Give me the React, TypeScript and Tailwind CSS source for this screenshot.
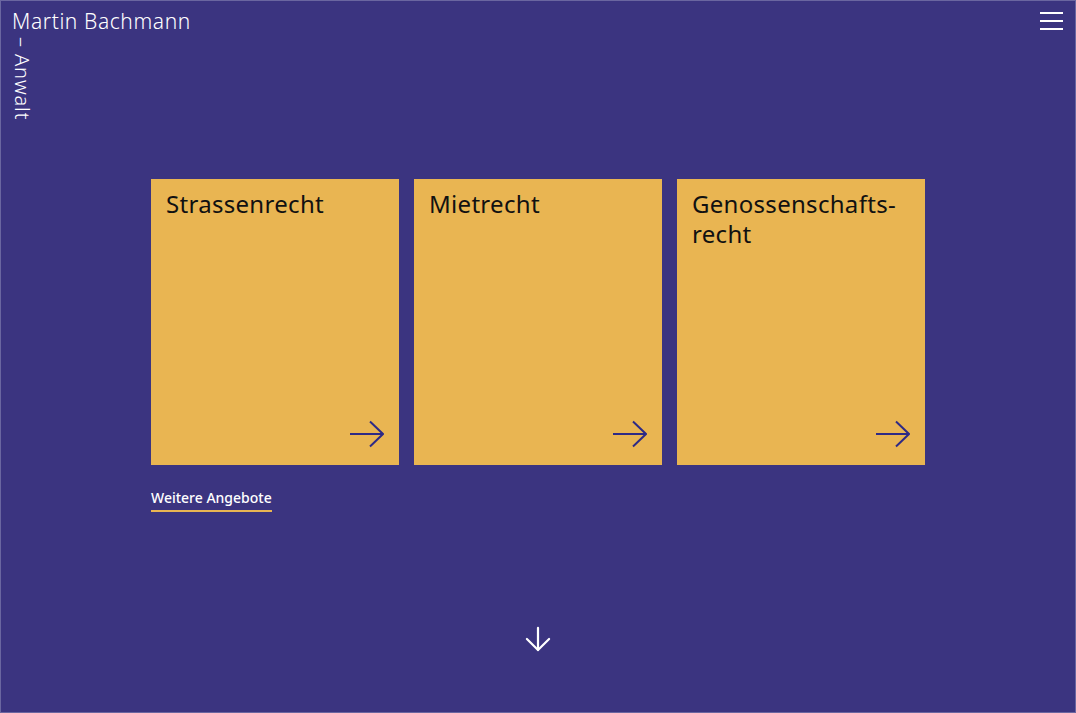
import { ArrowDown } from 'lucide-react'

const AREAS = [
  { id: 'strasse', title: 'Strassenrecht' },
  { id: 'miete', title: 'Mietrecht' },
  { id: 'genossen', title: 'Genossenschafts-\nrecht' },
]

function ArrowRight() {
  return (
    <svg width="36" height="28" viewBox="0 0 36 28" fill="none" stroke="#2e2a86" strokeWidth="2" strokeLinecap="butt">
      <line x1="2" y1="14" x2="35" y2="14" />
      <polyline points="22,1.5 35,14 22,26.5" strokeLinejoin="miter" />
    </svg>
  )
}

export default function App() {
  return (
    <div
      className="relative h-[713px] w-full overflow-hidden border border-[#6a66a0] bg-[#3b3480] text-white"
      style={{ fontFamily: '"Noto Sans", Inter, sans-serif' }}
    >
      {/* brand */}
      <header className="flex items-start justify-between px-[11px] pt-[6px]">
        <div>
          <div className="text-[21px] font-light leading-[28px] tracking-[0.6px]">Martin Bachmann</div>
          <div className="mt-[2px] h-[74px] w-[20px]">
            <div className="origin-top-left translate-x-[20px] rotate-90 whitespace-nowrap text-[20px] font-light leading-[20px] tracking-[0.9px]">
              – Anwalt
            </div>
          </div>
        </div>
        <button className="mr-[1px] mt-[5px] flex w-[23px] flex-col gap-[6px]" aria-label="Menü">
          <span className="block h-[2px] w-full bg-white" />
          <span className="block h-[2px] w-full bg-white" />
          <span className="block h-[2px] w-full bg-white" />
        </button>
      </header>

      {/* practice areas */}
      <main className="mx-auto mt-[68px] w-[774px]">
        <div className="grid grid-cols-3 gap-[15px]">
          {AREAS.map((a) => (
            <a
              key={a.id}
              href="#"
              className="flex h-[286px] flex-col justify-between bg-[#e9b552] px-[15px] pb-[17px] pt-[10px] text-[#111]"
            >
              <h2 className="whitespace-pre-line text-[24px] font-normal leading-[30px] tracking-[0.3px]">{a.title}</h2>
              <div className="flex justify-end">
                <ArrowRight />
              </div>
            </a>
          ))}
        </div>
        <a href="#" className="mt-[24px] inline-block border-b-2 border-[#e9b552] pb-[3px] text-[14px] font-medium leading-[18px] text-white">
          Weitere Angebote
        </a>
      </main>

      <div className="absolute bottom-[54px] left-0 right-0 flex justify-center">
        <ArrowDown size={38} strokeWidth={1.4} className="text-white" />
      </div>
    </div>
  )
}
